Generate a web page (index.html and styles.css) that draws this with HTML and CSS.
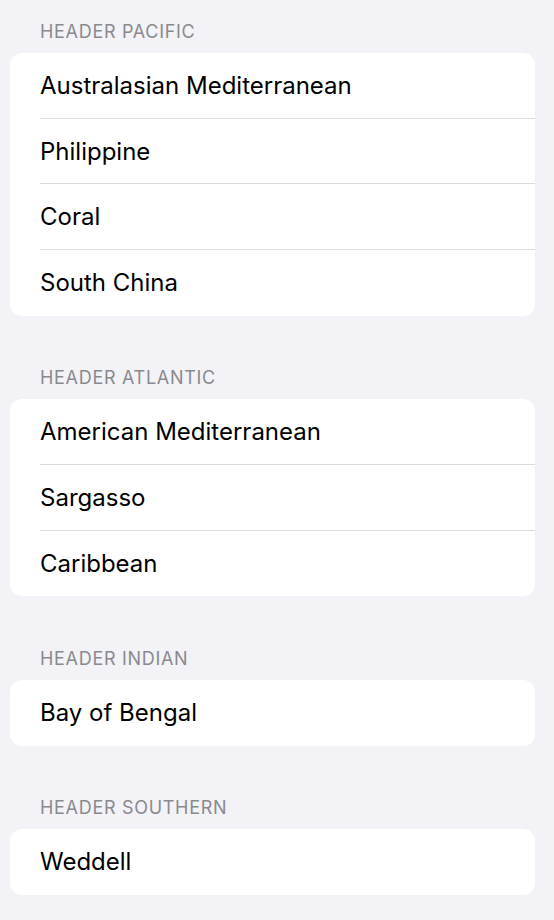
FILE: index.html
```html
<!DOCTYPE html>
<html>
<head>
<meta charset="utf-8">
<link rel="stylesheet" href="styles.css">
</head>
<body>
<div class="list">
  <section class="section">
    <h2 class="header">HEADER PACIFIC</h2>
    <div class="card">
      <div class="row">Australasian Mediterranean</div>
      <div class="row">Philippine</div>
      <div class="row">Coral</div>
      <div class="row">South China</div>
    </div>
  </section>
  <section class="section">
    <h2 class="header">HEADER ATLANTIC</h2>
    <div class="card">
      <div class="row">American Mediterranean</div>
      <div class="row">Sargasso</div>
      <div class="row">Caribbean</div>
    </div>
  </section>
  <section class="section">
    <h2 class="header">HEADER INDIAN</h2>
    <div class="card">
      <div class="row">Bay of Bengal</div>
    </div>
  </section>
  <section class="section">
    <h2 class="header">HEADER SOUTHERN</h2>
    <div class="card">
      <div class="row">Weddell</div>
    </div>
  </section>
</div>
</body>
</html>
```
FILE: styles.css
```css
html, body {
  margin: 0;
  padding: 0;
  background: #f2f2f7;
  font-family: Inter, "Liberation Sans", sans-serif;
}
.list {
  display: flex;
  flex-direction: column;
  gap: 51.5px;
  padding: 21px 19px 0 10px;
}
.header {
  margin: 0;
  padding: 0 30px 10px;
  font-size: 18px;
  line-height: 22px;
  font-weight: 400;
  color: #8a8a8e;
  letter-spacing: 0.7px;
}
.card {
  background: #fff;
  border-radius: 12px;
  overflow: hidden;
}
.row {
  height: 65.7px;
  margin-left: 30px;
  display: flex;
  align-items: center;
  font-size: 24px;
  color: #000;
  box-sizing: border-box;
  border-bottom: 1px solid #dcdcdf;
}
.row:last-child {
  border-bottom: none;
}
```
